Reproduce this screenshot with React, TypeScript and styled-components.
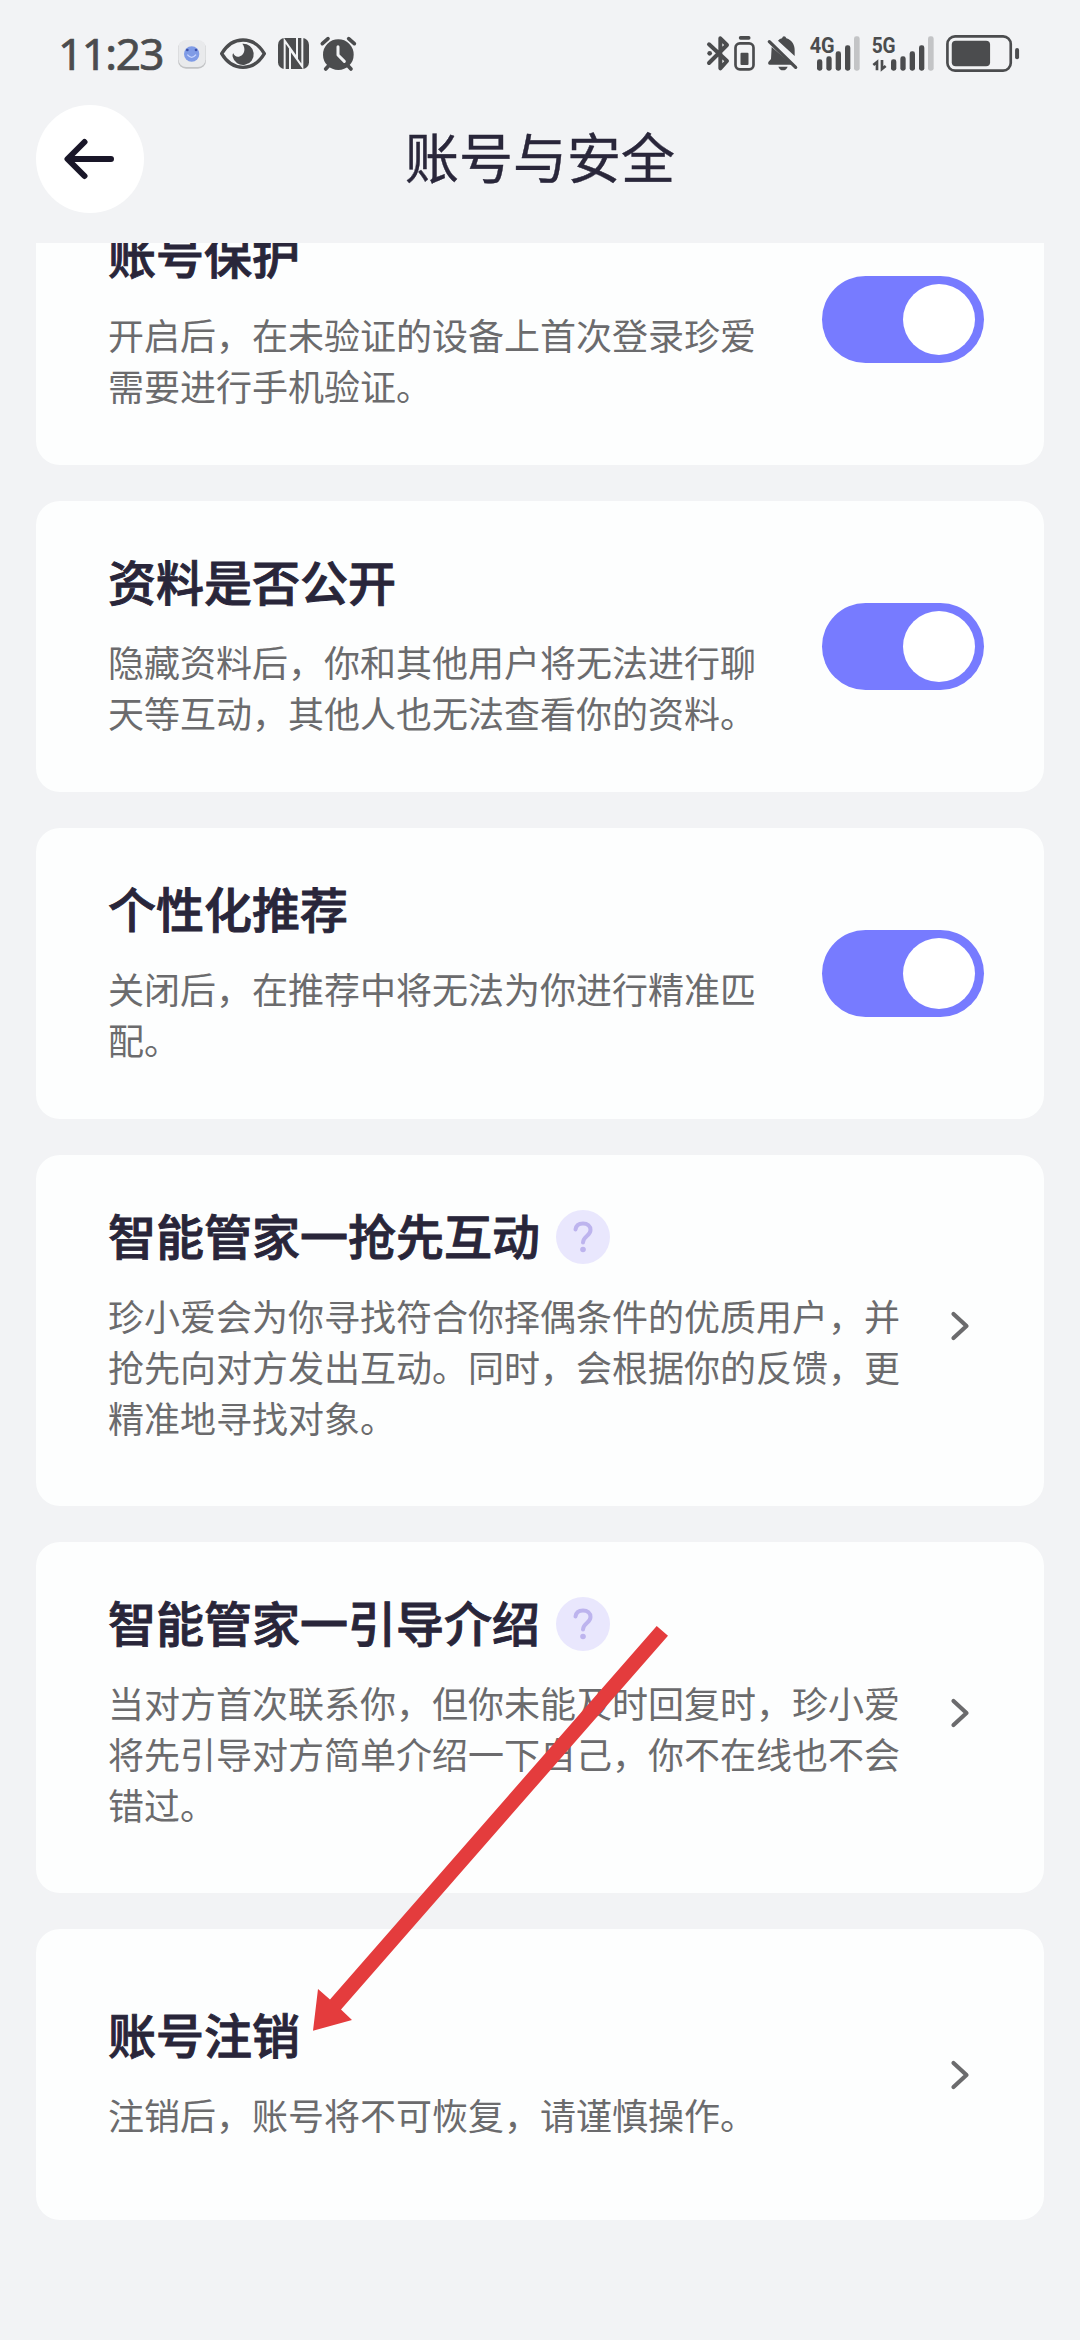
import React from "react";
import styled, { createGlobalStyle } from "styled-components";

const GlobalStyle = createGlobalStyle`
  *, *::before, *::after { box-sizing: border-box; }
  html, body { margin: 0; padding: 0; background: #f2f3f5; }
  body {
    font-family: "Noto Sans CJK SC", "Noto Sans", sans-serif;
    color: #29263a;
  }
`;

const INK = "#4b4c4e";

const Screen = styled.div`
  position: relative;
  display: flex;
  flex-direction: column;
  width: 1080px;
  height: 2340px;
  overflow: hidden;
  background: #f2f3f5;
`;

const StatusBar = styled.div`
  display: flex;
  justify-content: space-between;
  height: 90px;
  padding: 20px 61px 0 58px;
`;

const StatusGroup = styled.div`
  display: flex;
  align-items: flex-start;
  height: 70px;
`;

const Clock = styled.span`
  width: 120px;
  font-family: "Noto Sans", sans-serif;
  font-size: 44px;
  font-weight: 400;
  line-height: 67px;
  letter-spacing: -1.500px;
  color: ${INK};
  -webkit-text-stroke: 0.7px ${INK};
`;

const StatusIcon = styled.svg<{ $width: number; $before?: number }>`
  flex: none;
  display: block;
  width: ${(p) => p.$width}px;
  height: 70px;
  margin-left: ${(p) => p.$before ?? 0}px;
  overflow: visible;
`;

const Header = styled.header`
  display: grid;
  grid-template-columns: 108px 1fr 108px;
  align-items: center;
  height: 153px;
  padding: 0 36px 15px;
`;

const BackButton = styled.button`
  display: flex;
  align-items: center;
  justify-content: center;
  width: 108px;
  height: 108px;
  padding: 0;
  border: 0;
  border-radius: 50%;
  background: #fff;
`;

const HeaderTitle = styled.h1`
  margin: 0;
  padding-bottom: 7px;
  text-align: center;
  font-size: 54px;
  font-weight: 400;
  line-height: 80px;
  -webkit-text-stroke: 0.4px currentColor;
`;

const Viewport = styled.main`
  display: flex;
  flex: 1;
  flex-direction: column;
  overflow: hidden;
  padding: 0 36px;
`;

const Scrolled = styled.div`
  display: flex;
  flex-direction: column;
  gap: 36px;
  margin-top: -69px;
`;

const Card = styled.section<{ $height: number }>`
  display: flex;
  flex: none;
  align-items: center;
  justify-content: space-between;
  height: ${(p) => p.$height}px;
  padding: 0 60px 0 72px;
  border-radius: 24px;
  background: #fdfefe;
`;

const CardText = styled.div<{ $wide?: boolean; $top: number }>`
  align-self: flex-start;
  width: ${(p) => (p.$wide ? 800 : 660)}px;
  padding-top: ${(p) => p.$top}px;
`;

const CardTitle = styled.h2`
  display: flex;
  align-items: center;
  gap: 16px;
  margin: 0;
  font-size: 48px;
  font-weight: 500;
  line-height: 70px;
  -webkit-text-stroke: 0.9px currentColor;
`;

const Description = styled.p`
  margin: 21px 0 0;
  font-size: 36px;
  line-height: 51px;
  color: #6b6b6d;
`;

const Line = styled.span`
  display: block;
  white-space: nowrap;
`;

const Help = styled.span`
  display: flex;
  align-items: center;
  justify-content: center;
  width: 54px;
  height: 54px;
  margin-top: 6px;
  border-radius: 50%;
  background: #e9e7fd;
`;

const Toggle = styled.button`
  display: flex;
  align-items: center;
  justify-content: flex-end;
  width: 162px;
  height: 87px;
  padding: 0 9px 0 0;
  border: 0;
  border-radius: 44px;
  background: #777bff;
`;

const Knob = styled.span`
  width: 72px;
  height: 71px;
  border-radius: 50%;
  background: #fff;
`;

const Chevron = styled.svg<{ $lift: number }>`
  display: block;
  width: 21px;
  height: 32px;
  margin: 0 13px ${(p) => p.$lift * 2}px 0;
`;

const Pointer = styled.svg`
  position: absolute;
  left: 300px;
  top: 1610px;
  width: 380px;
  height: 440px;
`;

type Bar = [x: number, top: number];

function SignalBars({ bars, faded }: { bars: Bar[]; faded: number }) {
  return (
    <>
      {bars.map(([x, top]) => (
        <rect key={x} x={x} y={top} width="16" height={152 - top} rx="7" fill={INK} />
      ))}
      <rect x={faded} y="49" width="17" height="103" rx="7" fill="#c3c4c6" />
    </>
  );
}

function StatusLeft() {
  return (
    <StatusGroup>
      <Clock>11:23</Clock>
      <StatusIcon $width={28} viewBox="413 0 84 210">
        <rect x="413" y="62" width="84" height="84" rx="24" fill="#c2c3c5" />
        <rect x="414" y="60" width="82" height="81" rx="23" fill="#e9eaec" />
        <circle cx="454" cy="102" r="23" fill="#7f9be6" />
        <circle cx="441" cy="90" r="4" fill="#3c50a8" />
        <circle cx="467" cy="90" r="4" fill="#3c50a8" />
        <path d="M441 104q13 16 26 0" fill="none" stroke="#c7d5ff" strokeWidth="4" />
      </StatusIcon>
      <StatusIcon $width={46} $before={13.5} viewBox="537 0 138 210">
        <path
          d="M542 101C558 74 580 60 606 60s48 14 64 41c-16 27-38 41-64 41s-48-14-64-41z"
          fill="none"
          stroke={INK}
          strokeWidth="10"
          strokeLinejoin="round"
        />
        <path
          d="M604 71a32 32 0 1 1-29 39c-1-5 0-8 2-10 3 9 12 13 20 9 14-6 18-24 7-38z"
          fill={INK}
        />
      </StatusIcon>
      <StatusIcon $width={31} $before={12} viewBox="711 0 93 210">
        <rect x="711" y="54" width="93" height="93" rx="20" fill={INK} />
        <path
          d="M731 147V62L768 114V54M747 147V88L784 140V54"
          fill="none"
          stroke="#f2f3f5"
          strokeWidth="6"
        />
      </StatusIcon>
      <StatusIcon $width={37} $before={11.5} viewBox="838 0 111 210">
        <circle cx="893" cy="104" r="46" fill={INK} />
        <path
          d="M845 71l17-15M941 71l-17-15M864 137l-9 10M922 137l9 10"
          stroke={INK}
          strokeWidth="11"
          strokeLinecap="round"
        />
        <path
          d="M892 80v25l19 19"
          fill="none"
          stroke="#f2f3f5"
          strokeWidth="9"
          strokeLinecap="round"
          strokeLinejoin="round"
        />
      </StatusIcon>
    </StatusGroup>
  );
}

function StatusRight() {
  return (
    <StatusGroup>
      <StatusIcon $width={22} viewBox="52 0 66 210">
        <path
          d="M58 73l54 50-20 22V55l20 20-54 54"
          fill="none"
          stroke={INK}
          strokeWidth="12"
          strokeLinecap="round"
          strokeLinejoin="round"
        />
        <circle cx="60" cy="100" r="7" fill={INK} />
      </StatusIcon>
      <StatusIcon $width={21} $before={4.5} viewBox="132 0 62 210">
        <rect x="146" y="48" width="35" height="11" rx="5" fill={INK} />
        <rect x="136" y="70" width="54" height="78" rx="13" fill="none" stroke={INK} strokeWidth="8" />
        <rect x="151" y="98" width="24" height="37" rx="3" fill={INK} />
      </StatusIcon>
      <StatusIcon $width={31} $before={12} viewBox="230 0 93 210">
        <path
          d="M244 81l62 53h-68q-6 0-4-8l8-9zM263 62q5-6 12-7 2-6 6-6 5 0 7 6c18 6 25 20 25 36v17zM264 140h28q-4 11-14 11t-14-11z"
          fill={INK}
        />
        <path d="M237 65l79 77" stroke={INK} strokeWidth="10" strokeLinecap="round" />
      </StatusIcon>
      <StatusIcon $width={50} $before={12} viewBox="358 0 150 210">
        <text
          x="357"
          y="98"
          fill={INK}
          fontFamily="Roboto, sans-serif"
          fontSize="64"
          fontWeight="700"
          textLength="75"
          lengthAdjust="spacingAndGlyphs"
        >
          4G
        </text>
        <SignalBars bars={[[379, 118], [407, 109], [435, 94], [463, 76]]} faded={490} />
      </StatusIcon>
      <StatusIcon $width={62} $before={12} viewBox="543 0 186 210">
        <text
          x="542"
          y="98"
          fill={INK}
          fontFamily="Roboto, sans-serif"
          fontSize="64"
          fontWeight="700"
          textLength="72"
          lengthAdjust="spacingAndGlyphs"
        >
          5G
        </text>
        <path d="M547 135l11-9v25M573 120v27l11-9" fill="none" stroke={INK} strokeWidth="8" />
        <SignalBars bars={[[600, 118], [628, 109], [656, 94], [684, 76]]} faded={711} />
      </StatusIcon>
      <StatusIcon $width={73.5} $before={12} viewBox="765 0 220 210">
        <rect x="769" y="49" width="190" height="103" rx="23" fill="none" stroke={INK} strokeWidth="8" />
        <rect x="782" y="62" width="115" height="77" rx="12" fill={INK} />
        <rect x="972" y="84" width="12" height="34" rx="6" fill={INK} />
      </StatusIcon>
    </StatusGroup>
  );
}

interface Item {
  title: string;
  lines: string[];
  height: number;
  top: number;
  kind: "toggle" | "link";
  help?: boolean;
  lift?: number;
}

const ITEMS: Item[] = [
  {
    title: "账号保护",
    lines: ["开启后，在未验证的设备上首次登录珍爱", "需要进行手机验证。"],
    height: 291,
    top: 44,
    kind: "toggle",
  },
  {
    title: "资料是否公开",
    lines: ["隐藏资料后，你和其他用户将无法进行聊", "天等互动，其他人也无法查看你的资料。"],
    height: 291,
    top: 44,
    kind: "toggle",
  },
  {
    title: "个性化推荐",
    lines: ["关闭后，在推荐中将无法为你进行精准匹", "配。"],
    height: 291,
    top: 44,
    kind: "toggle",
  },
  {
    title: "智能管家一抢先互动",
    lines: [
      "珍小爱会为你寻找符合你择偶条件的优质用户，并",
      "抢先向对方发出互动。同时，会根据你的反馈，更",
      "精准地寻找对象。",
    ],
    height: 351,
    top: 44,
    kind: "link",
    help: true,
    lift: 4.5,
  },
  {
    title: "智能管家一引导介绍",
    lines: [
      "当对方首次联系你，但你未能及时回复时，珍小爱",
      "将先引导对方简单介绍一下自己，你不在线也不会",
      "错过。",
    ],
    height: 351,
    top: 44,
    kind: "link",
    help: true,
    lift: 4.5,
  },
  {
    title: "账号注销",
    lines: ["注销后，账号将不可恢复，请谨慎操作。"],
    height: 291,
    top: 69,
    kind: "link",
    lift: 0,
  },
];

function SettingCard({ item }: { item: Item }) {
  return (
    <Card $height={item.height}>
      <CardText $wide={item.kind === "link"} $top={item.top}>
        <CardTitle>
          {item.title}
          {item.help && (
            <Help>
              <svg width="20" height="32" viewBox="0 0 20 32">
                <path
                  d="M2.5 8.5C3 4.5 6 2.5 10 2.5c4.500 0 7.500 2.500 7.500 6.500 0 6-7.500 6-7.500 12.500"
                  fill="none"
                  stroke="#bdb4ee"
                  strokeWidth="4"
                  strokeLinecap="round"
                />
                <circle cx="10" cy="28.500" r="2.800" fill="#bdb4ee" />
              </svg>
            </Help>
          )}
        </CardTitle>
        <Description>
          {item.lines.map((line) => (
            <Line key={line}>{line}</Line>
          ))}
        </Description>
      </CardText>
      {item.kind === "toggle" ? (
        <Toggle role="switch" aria-checked="true">
          <Knob />
        </Toggle>
      ) : (
        <Chevron $lift={item.lift ?? 0} viewBox="0 0 21 32">
          <path
            d="M3.500 4l13 12-13 12"
            fill="none"
            stroke="#6b6b6d"
            strokeWidth="4.200"
            strokeLinecap="round"
            strokeLinejoin="round"
          />
        </Chevron>
      )}
    </Card>
  );
}

export default function App() {
  return (
    <>
      <GlobalStyle />
      <Screen>
        <StatusBar>
          <StatusLeft />
          <StatusRight />
        </StatusBar>
        <Header>
          <BackButton>
            <svg width="52" height="44" viewBox="0 0 52 44">
              <path
                d="M47 22H4M20.500 5L3.500 22l17 17"
                fill="none"
                stroke="#191628"
                strokeWidth="6"
                strokeLinecap="round"
                strokeLinejoin="round"
              />
            </svg>
          </BackButton>
          <HeaderTitle>账号与安全</HeaderTitle>
        </Header>
        <Viewport>
          <Scrolled>
            {ITEMS.map((item) => (
              <SettingCard key={item.title} item={item} />
            ))}
          </Scrolled>
        </Viewport>
        <Pointer viewBox="300 1610 380 440">
          <path
            d="M313 2030.700L318 1989l12 10.500L656.700 1626l11.300 9.700L341 2009.500l11 10.500z"
            fill="#e43c3d"
          />
        </Pointer>
      </Screen>
    </>
  );
}
